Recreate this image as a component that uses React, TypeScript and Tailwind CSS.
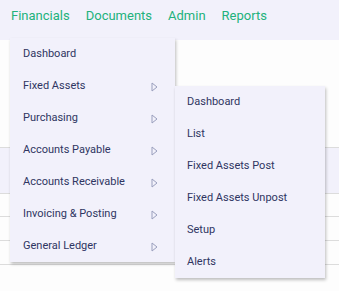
import { FC } from "react";

const mainItems = [
  { label: "Dashboard", sub: false },
  { label: "Fixed Assets", sub: true },
  { label: "Purchasing", sub: true },
  { label: "Accounts Payable", sub: true },
  { label: "Accounts Receivable", sub: true },
  { label: "Invoicing & Posting", sub: true },
  { label: "General Ledger", sub: true },
];

const subItems = ["Dashboard", "List", "Fixed Assets Post", "Fixed Assets Unpost", "Setup", "Alerts"];

const Caret: FC = () => (
  <svg width="7" height="10" viewBox="0 0 7 10" className="text-[#9a9fbd]">
    <path d="M1 1 L6 5 L1 9 Z" fill="none" stroke="currentColor" strokeWidth="1" strokeLinejoin="round" />
  </svg>
);

export default function App() {
  return (
    <div className="relative w-[339px] h-[291px] overflow-hidden bg-[#fdfdfd] font-['Roboto',sans-serif]">
      <nav className="h-[40px] bg-[#f2f1fb] flex items-start gap-4 pl-[11px] pt-[6px] text-[13px] text-[#22b27c]">
        <span>Financials</span>
        <span>Documents</span>
        <span>Admin</span>
        <span>Reports</span>
      </nav>

      <div className="mt-[107px]">
        <div className="h-[46px] border-t border-[#dcdcdc] bg-[#f2f1fb]" />
        <div className="h-[23px] border-t border-[#dcdcdc]" />
        <div className="h-[24px] border-t border-[#dcdcdc]" />
        <div className="h-[24px] border-t border-[#dcdcdc]" />
        <div className="border-t border-[#dcdcdc]" />
      </div>

      <ul className="absolute left-[10px] top-[38px] w-[165px] bg-[#f2f1fb] shadow-[1px_2px_3px_rgba(0,0,0,0.25)] text-[11px] text-[#2f3562]">
        {mainItems.map((it) => (
          <li key={it.label} className="h-[32px] flex items-center justify-between pt-px pl-[13px] pr-[17px]">
            <span>{it.label}</span>
            {it.sub && <Caret />}
          </li>
        ))}
      </ul>

      <ul className="absolute left-[175px] top-[86px] w-[150px] bg-[#f2f1fb] shadow-[1px_2px_3px_rgba(0,0,0,0.25)] text-[11px] text-[#2f3562]">
        {subItems.map((s) => (
          <li key={s} className="h-[32px] flex items-center pt-px pl-[12px]">
            {s}
          </li>
        ))}
      </ul>
    </div>
  );
}
